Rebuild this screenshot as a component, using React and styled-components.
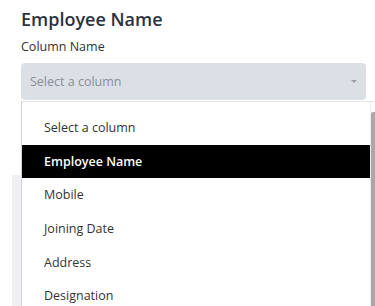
import React from "react";
import styled, { createGlobalStyle } from "styled-components";

const GlobalStyle = createGlobalStyle`
  html, body {
    margin: 0;
    padding: 0;
    background: #ffffff;
    overflow: hidden;
  }
  body {
    font-family: "Open Sans", "Noto Sans", sans-serif;
    color: #333;
  }
`;

const options = [
  "Select a column",
  "Employee Name",
  "Mobile",
  "Joining Date",
  "Address",
  "Designation",
];

const App = () => {
  return (
    <>
      <GlobalStyle />
      <Wrapper>
        <Heading>Employee Name</Heading>
        <Label>Column Name</Label>
        <SelectWrap>
          <SelectBox>
            <Placeholder>Select a column</Placeholder>
            <Caret />
          </SelectBox>
          <Dropdown>
            <List>
              {options.map((o) => (
                <Item key={o} active={o === "Employee Name"}>
                  {o}
                </Item>
              ))}
            </List>
            <Track>
              <Thumb />
            </Track>
          </Dropdown>
        </SelectWrap>
        <BehindInput />
        <BehindPanel />
      </Wrapper>
    </>
  );
};

const Wrapper = styled.main`
  padding: 7px 9px 0 21px;
  width: 375px;
  height: 306px;
  box-sizing: border-box;
  overflow: hidden;
`;
const Heading = styled.h2`
  margin: 0;
  font-size: 18px;
  line-height: 24px;
  font-weight: 600;
  color: #2b3240;
`;
const Label = styled.div`
  margin-top: 7px;
  font-size: 12.5px;
  line-height: 18px;
  color: #2f3338;
`;
const SelectWrap = styled.div`
  position: relative;
  margin-top: 7px;
`;
const SelectBox = styled.div`
  display: flex;
  align-items: center;
  justify-content: space-between;
  height: 37px;
  box-sizing: border-box;
  padding: 0 9px;
  background: #dce0e6;
  border-radius: 4px;
`;
const Placeholder = styled.span`
  font-size: 12.5px;
  color: #898e95;
`;
const Caret = styled.span`
  width: 0;
  height: 0;
  border-left: 3px solid transparent;
  border-right: 3px solid transparent;
  border-top: 3px solid #9a9ea4;
`;
const Dropdown = styled.div`
  position: absolute;
  top: 38px;
  left: 0;
  width: 354px;
  height: 205px;
  overflow: hidden;
  display: flex;
  background: #fff;
  border-top: 1px solid #e4e4e4;
  border-left: 1px solid #d4d4d4;
  z-index: 2;
`;
const List = styled.ul`
  list-style: none;
  margin: 0;
  padding: 9px 0 0;
  flex: 1;
`;
const Item = styled.li`
  height: 33.6px;
  display: flex;
  align-items: center;
  padding-left: 22px;
  font-size: 12.5px;
  font-weight: ${(p) => (p.active ? 600 : 400)};
  color: ${(p) => (p.active ? "#ffffff" : "#333333")};
  background: ${(p) => (p.active ? "#000000" : "transparent")};
`;
const Track = styled.div`
  width: 6px;
  border-left: 1px solid #ececec;
  box-sizing: border-box;
  padding-top: 10px;
`;
const Thumb = styled.div`
  height: 220px;
  background: #a8a8a8;
  border-radius: 2px 0 0 0;
`;
const BehindInput = styled.div`
  margin-top: 22px;
  height: 22px;
  border-left: 2px solid #1d8a8c;
`;
const BehindPanel = styled.div`
  margin: 31px 0 0 -9px;
  height: 140px;
  background: #f0f0f2;
`;

export default App;
